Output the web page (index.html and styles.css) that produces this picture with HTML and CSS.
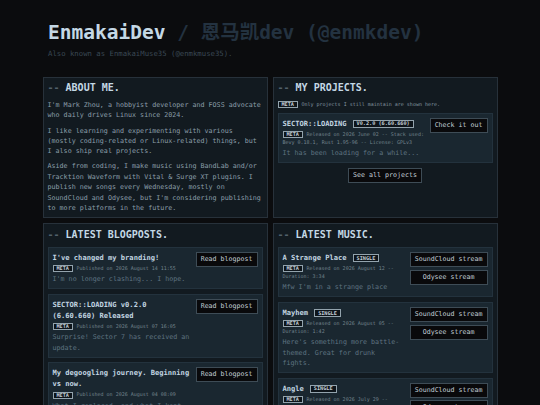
FILE: index.html
```html
<!DOCTYPE html>
<html lang="en">
<head>
<meta charset="utf-8">
<title>EnmakaiDev</title>
<link rel="stylesheet" href="styles.css">
</head>
<body>
<div class="page">
  <header class="site-header">
    <h1 class="site-title"><span class="brand">EnmakaiDev</span><span class="alt"> / 恩马凯dev (@enmkdev)</span></h1>
    <p class="aka">Also known as EnmakaiMuse35 (@enmkmuse35).</p>
  </header>

  <main class="grid">
    <section class="panel">
      <h2 class="panel-title"><span class="dash">--</span> ABOUT ME.</h2>
      <p class="prose">I'm Mark Zhou, a hobbyist developer and FOSS advocate who daily drives Linux since 2024.</p>
      <p class="prose">I like learning and experimenting with various (mostly coding-related or Linux-related) things, but I also ship real projects.</p>
      <p class="prose">Aside from coding, I make music using BandLab and/or Tracktion Waveform with Vital &amp; Surge XT plugins. I publish new songs every Wednesday, mostly on SoundCloud and Odysee, but I'm considering publishing to more platforms in the future.</p>
    </section>

    <section class="panel">
      <h2 class="panel-title"><span class="dash">--</span> MY PROJECTS.</h2>
      <p class="meta note"><span class="badge">META</span>Only projects I still maintain are shown here.</p>
      <div class="card-list">
        <article class="card">
          <div class="card-body">
            <h3 class="card-title">SECTOR::LOADING<span class="badge tag">V0.2.0 (6.60.660)</span></h3>
            <p class="meta"><span class="badge">META</span>Released on 2026 June 02 -- Stack used: Bevy 0.18.1, Rust 1.95-96 -- License: GPLv3</p>
            <p class="desc">It has been loading for a while...</p>
          </div>
          <div class="actions">
            <a class="btn" href="#">Check it out</a>
          </div>
        </article>
      </div>
      <div class="more">
        <a class="btn" href="#">See all projects</a>
      </div>
    </section>

    <section class="panel">
      <h2 class="panel-title"><span class="dash">--</span> LATEST BLOGPOSTS.</h2>
      <div class="card-list">
        <article class="card">
          <div class="card-body">
            <h3 class="card-title">I've changed my branding!</h3>
            <p class="meta"><span class="badge">META</span>Published on 2026 August 14 11:55</p>
            <p class="desc">I'm no longer clashing... I hope.</p>
          </div>
          <div class="actions">
            <a class="btn" href="#">Read blogpost</a>
          </div>
        </article>
        <article class="card">
          <div class="card-body">
            <h3 class="card-title">SECTOR::LOADING v0.2.0 (6.60.660) Released</h3>
            <p class="meta"><span class="badge">META</span>Published on 2026 August 07 16:05</p>
            <p class="desc">Surprise! Sector 7 has received an update.</p>
          </div>
          <div class="actions">
            <a class="btn" href="#">Read blogpost</a>
          </div>
        </article>
        <article class="card">
          <div class="card-body">
            <h3 class="card-title">My degoogling journey. Beginning vs now.</h3>
            <p class="meta"><span class="badge">META</span>Published on 2026 August 04 08:09</p>
            <p class="desc">What I replaced, and what I kept.</p>
          </div>
          <div class="actions">
            <a class="btn" href="#">Read blogpost</a>
          </div>
        </article>
      </div>
    </section>

    <section class="panel">
      <h2 class="panel-title"><span class="dash">--</span> LATEST MUSIC.</h2>
      <div class="card-list">
        <article class="card">
          <div class="card-body">
            <h3 class="card-title">A Strange Place<span class="badge tag">SINGLE</span></h3>
            <p class="meta"><span class="badge">META</span>Released on 2026 August 12 -- Duration: 3:34</p>
            <p class="desc">Mfw I'm in a strange place</p>
          </div>
          <div class="actions">
            <a class="btn" href="#">SoundCloud stream</a>
            <a class="btn" href="#">Odysee stream</a>
          </div>
        </article>
        <article class="card">
          <div class="card-body">
            <h3 class="card-title">Mayhem<span class="badge tag">SINGLE</span></h3>
            <p class="meta"><span class="badge">META</span>Released on 2026 August 05 -- Duration: 1:42</p>
            <p class="desc">Here's something more battle-themed. Great for drunk fights.</p>
          </div>
          <div class="actions">
            <a class="btn" href="#">SoundCloud stream</a>
            <a class="btn" href="#">Odysee stream</a>
          </div>
        </article>
        <article class="card">
          <div class="card-body">
            <h3 class="card-title">Angle<span class="badge tag">SINGLE</span></h3>
            <p class="meta"><span class="badge">META</span>Released on 2026 July 29 -- Duration: 2:51</p>
            <p class="desc">A different point of view.</p>
          </div>
          <div class="actions">
            <a class="btn" href="#">SoundCloud stream</a>
            <a class="btn" href="#">Odysee stream</a>
          </div>
        </article>
      </div>
    </section>
  </main>
</div>
</body>
</html>
```

FILE: styles.css
```css
* {
  box-sizing: border-box;
}

html,
body {
  margin: 0;
  padding: 0;
}

body {
  background: #0b0c0e;
  color: #8b9ea9;
  font-family: "DejaVu Sans Mono", "Noto Sans CJK SC", monospace;
}

.page {
  width: 455px;
  margin: 0 auto;
  padding-top: 21px;
}

.site-header {
  padding: 0 5.5px;
}

.site-title {
  margin: 0;
  font-size: 19.5px;
  line-height: 24px;
  font-weight: bold;
  font-family: "DejaVu Sans Mono", "Noto Sans CJK SC", monospace;
}

.brand {
  color: #c4d8e5;
}

.alt {
  color: #233240;
}

.aka {
  margin: 4px 0 0;
  font-size: 7.3px;
  line-height: 10px;
  color: #3a4854;
}

.grid {
  margin-top: 17.5px;
  display: grid;
  grid-template-columns: 1fr 1fr;
  gap: 5px;
  align-items: stretch;
}

.panel {
  background: #121a20;
  border: 1px solid #27313a;
  padding: 4.5px 4px 4px;
  min-width: 0;
}

.panel-title {
  margin: 0 0 6px;
  font-size: 10px;
  line-height: 12px;
  font-weight: bold;
  color: #c4d8e5;
}

.dash {
  color: #52606b;
}

.prose {
  margin: 0 0 4.7px;
  font-size: 6.7px;
  line-height: 10.4px;
  color: #8b9ea9;
}

.prose:last-child {
  margin-bottom: 0;
}

.card-list {
  display: flex;
  flex-direction: column;
  gap: 4.5px;
  margin-top: 1.5px;
}

.note + .card-list {
  margin-top: 4.5px;
}

.card {
  display: flex;
  align-items: flex-start;
  gap: 5px;
  background: #1a2730;
  border: 1px solid #23323d;
  padding: 4px;
}

.card-body {
  flex: 1;
  min-width: 0;
}

.card-title {
  margin: 0;
  font-size: 7.1px;
  line-height: 11px;
  font-weight: bold;
  color: #c2d5e1;
}

.meta {
  margin: 1px 0 0;
  font-size: 5px;
  line-height: 8px;
  color: #74858f;
}

.note {
  margin: 0;
  color: #8496a1;
}

.badge {
  display: inline-block;
  vertical-align: middle;
  font-size: 5.2px;
  line-height: 5px;
  padding: 0 3px;
  margin-right: 3.5px;
  border: 1px solid #93a3ad;
  background: #0d141a;
  color: #c5d0d8;
  font-weight: bold;
}

.badge.tag {
  margin: 0 0 0 6px;
  padding: 0.5px 3px;
}

.desc {
  margin: 2px 0 0;
  font-size: 6.7px;
  line-height: 10.4px;
  color: #5e7380;
}

.actions {
  flex: none;
  display: flex;
  flex-direction: column;
  gap: 2.6px;
}

.btn {
  display: block;
  background: #09090b;
  border: 1px solid #3e4c56;
  color: #c2ced6;
  font-size: 6.64px;
  line-height: 9px;
  padding: 2px 4px;
  text-align: center;
  white-space: nowrap;
  text-decoration: none;
}

.more {
  display: flex;
  justify-content: center;
  margin-top: 4.5px;
}
```
